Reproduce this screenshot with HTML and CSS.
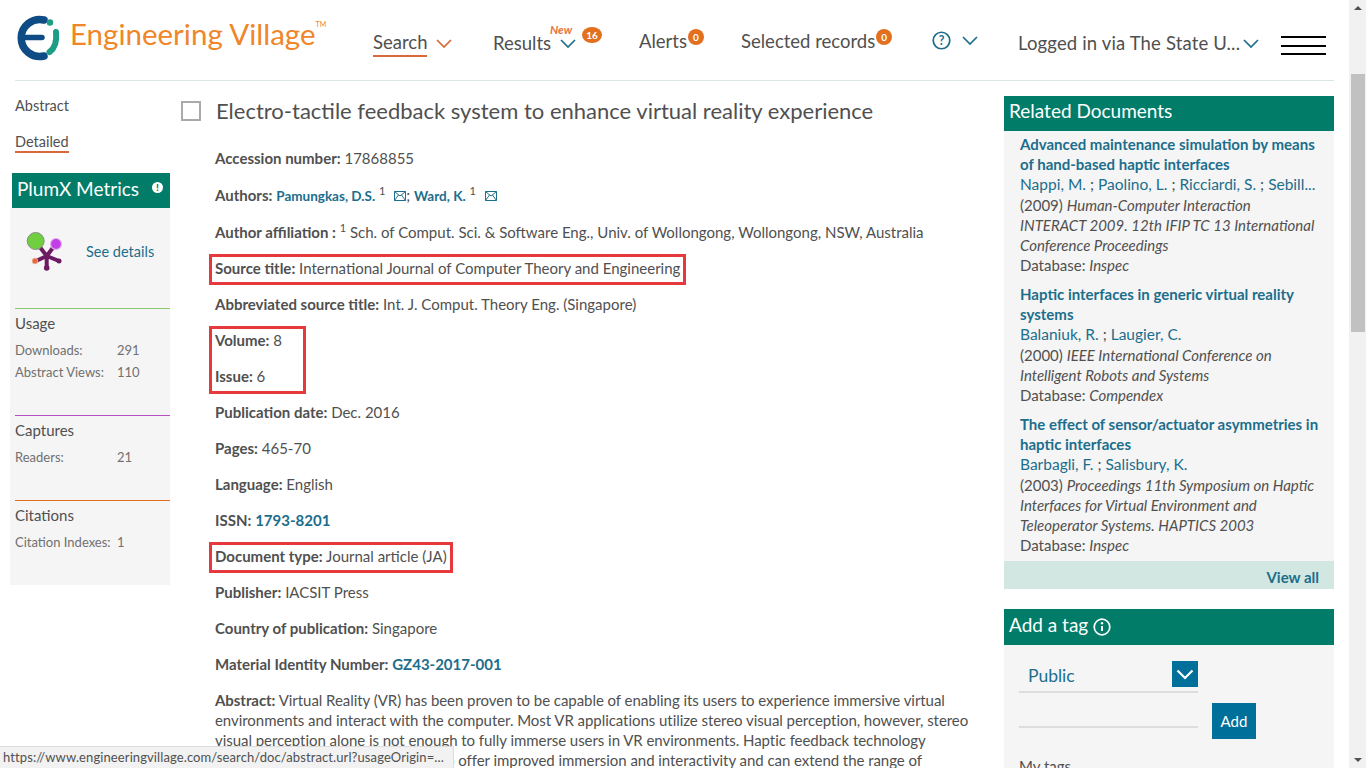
FILE: index.html
```html
<!DOCTYPE html>
<html lang="en">

<head>
    <meta charset="UTF-8" />
    <title>Engineering Village - Detailed record</title>
    <link rel="stylesheet" href="styles.css">
</head>

<body>
    <div class="page">
        <header class="topbar">
            <div class="logo">
                <svg class="logo-mark" width="44" height="46" viewBox="0 0 44 46">
                    <path d="M27 5A18.500 18.500 0 1 0 27 41" fill="none" stroke="#0f4c86" stroke-width="7.500" stroke-linecap="round" />
                    <path d="M7 22.500H25" stroke="#0f4c86" stroke-width="5.500" stroke-linecap="round" />
                    <circle cx="33" cy="7.500" r="3.200" fill="#1d9d84" />
                    <path d="M39 17C40 26 38 33 32.500 37" fill="none" stroke="#1d9d84" stroke-width="6" stroke-linecap="round" />
                </svg>
                <span class="logo-text">Engineering Village<sup class="tm">TM</sup></span>
            </div>
            <nav class="nav">
                <a class="nav-item nav-search"><span class="current">Search</span>
                    <svg class="chev" width="16" height="9" viewBox="0 0 16 9"><path d="M1 1L8 8L15 1" fill="none" stroke="#d9683a" stroke-width="1.700" /></svg>
                </a>
                <a class="nav-item nav-results">Results
                    <svg class="chev" width="16" height="9" viewBox="0 0 16 9"><path d="M1 1L8 8L15 1" fill="none" stroke="#1c6e8c" stroke-width="1.700" /></svg>
                    <em class="new">New</em><span class="badge badge-wide">16</span>
                </a>
                <a class="nav-item nav-alerts">Alerts<span class="badge">0</span></a>
                <a class="nav-item nav-selected">Selected records<span class="badge">0</span></a>
                <a class="nav-item nav-help">
                    <svg width="19" height="19" viewBox="0 0 20 20"><circle cx="10" cy="10" r="8.700" fill="none" stroke="#1c6e8c" stroke-width="1.800" /><text x="10" y="14.500" text-anchor="middle" class="help-mark">?</text></svg>
                    <svg class="chev" width="16" height="9" viewBox="0 0 16 9"><path d="M1 1L8 8L15 1" fill="none" stroke="#1c6e8c" stroke-width="1.700" /></svg>
                </a>
                <a class="nav-item nav-login">Logged in via The State U...
                    <svg class="chev" width="16" height="9" viewBox="0 0 16 9"><path d="M1 1L8 8L15 1" fill="none" stroke="#1c6e8c" stroke-width="1.700" /></svg>
                </a>
                <a class="burger"><i></i><i></i><i></i></a>
            </nav>
        </header>

        <div class="columns">
            <aside class="left">
                <ul class="tabs">
                    <li>Abstract</li>
                    <li><span class="tab-on">Detailed</span></li>
                </ul>
                <div class="plum">
                    <div class="plum-head">PlumX Metrics <span class="plum-info">!</span></div>
                    <div class="plum-body">
                        <div class="plum-top">
                            <svg width="42" height="42" viewBox="0 0 42 42">
                                <path d="M20.700 25L10 11M20.700 25L29 14M20.700 25L10 30M20.700 25V37M20.700 25L33 30" stroke="#6d1a63" stroke-width="4" stroke-linecap="round" />
                                <circle cx="20.700" cy="37" r="2.800" fill="#6d1a63" />
                                <circle cx="33" cy="30" r="2.500" fill="#6d1a63" />
                                <circle cx="9.700" cy="10" r="8.500" fill="#6fcf3f" stroke="#8c8c8c" stroke-width="1" />
                                <circle cx="30" cy="13" r="5.500" fill="#c43ee8" stroke="#e0b5ee" stroke-width="1.200" />
                                <circle cx="9" cy="30" r="2.800" fill="#e8683a" stroke="#e8a58c" stroke-width="1" />
                            </svg>
                            <a class="see-details">See details</a>
                        </div>
                        <div class="metric metric-green">
                            <h4>Usage</h4>
                            <div class="metric-row"><span>Downloads:</span><span>291</span></div>
                            <div class="metric-row"><span>Abstract Views:</span><span>110</span></div>
                        </div>
                        <div class="metric metric-purple">
                            <h4>Captures</h4>
                            <div class="metric-row"><span>Readers:</span><span>21</span></div>
                        </div>
                        <div class="metric metric-orange">
                            <h4>Citations</h4>
                            <div class="metric-row"><span>Citation Indexes:</span><span>1</span></div>
                        </div>
                    </div>
                </div>
            </aside>

            <main class="record">
                <div class="title-row">
                    <span class="checkbox"></span>
                    <h1>Electro-tactile feedback system to enhance virtual reality experience</h1>
                </div>
                <div class="fields">
                    <p class="tall-row"><b>Accession number:</b> 17868855</p>
                    <p class="tall-row"><b>Authors:</b> <a class="author">Pamungkas, D.S.</a> <sup>1</sup>
                        <svg class="mail" width="12" height="10" viewBox="0 0 12 10"><path d="M.5 .5H11.500V9.500H.5ZM.5 .5L6 5L11.500 .5M.5 9.500L4.500 4M11.500 9.500L7.500 4" fill="none" stroke="#1c6e8c" /></svg>; <a class="author">Ward, K.</a> <sup>1</sup>
                        <svg class="mail" width="12" height="10" viewBox="0 0 12 10"><path d="M.5 .5H11.500V9.500H.5ZM.5 .5L6 5L11.500 .5M.5 9.500L4.500 4M11.500 9.500L7.500 4" fill="none" stroke="#1c6e8c" /></svg>
                    </p>
                    <p><b>Author affiliation :</b> <sup>1</sup> Sch. of Comput. Sci. &amp; Software Eng., Univ. of Wollongong, Wollongong, NSW, Australia</p>
                    <p class="marked"><b>Source title:</b> International Journal of Computer Theory and Engineering</p>
                    <p><b>Abbreviated source title:</b> Int. J. Comput. Theory Eng. (Singapore)</p>
                    <div class="marked marked-block">
                        <p><b>Volume:</b> 8</p>
                        <p><b>Issue:</b> 6</p>
                    </div>
                    <p><b>Publication date:</b> Dec. 2016</p>
                    <p><b>Pages:</b> 465-70</p>
                    <p><b>Language:</b> English</p>
                    <p><b>ISSN:</b> <a class="strong-link">1793-8201</a></p>
                    <p class="marked"><b>Document type:</b> Journal article (JA)</p>
                    <p><b>Publisher:</b> IACSIT Press</p>
                    <p><b>Country of publication:</b> Singapore</p>
                    <p><b>Material Identity Number:</b> <a class="strong-link">GZ43-2017-001</a></p>
                    <p class="abstract"><b>Abstract:</b> Virtual Reality (VR) has been proven to be capable of enabling its users to experience immersive virtual<br>environments and interact with the computer. Most VR applications utilize stereo visual perception, however, stereo<br>visual perception alone is not enough to fully immerse users in VR environments. Haptic feedback technology<br>can be combined with stereo view to offer improved immersion and interactivity and can extend the range of</p>
                </div>
            </main>

            <aside class="right">
                <section class="panel">
                    <h3 class="panel-head">Related Documents</h3>
                    <div class="related">
                        <div class="doc">
                            <a class="doc-title">Advanced maintenance simulation by means of hand-based haptic interfaces</a>
                            <div class="doc-authors"><a>Nappi, M.</a> ; <a>Paolino, L.</a> ; <a>Ricciardi, S.</a> ; <a>Sebill...</a></div>
                            <div>(2009) <i>Human-Computer Interaction INTERACT 2009. 12th IFIP TC 13 International Conference Proceedings</i></div>
                            <div>Database: <i>Inspec</i></div>
                        </div>
                        <div class="doc">
                            <a class="doc-title">Haptic interfaces in generic virtual reality systems</a>
                            <div class="doc-authors"><a>Balaniuk, R.</a> ; <a>Laugier, C.</a></div>
                            <div>(2000) <i>IEEE International Conference on Intelligent Robots and Systems</i></div>
                            <div>Database: <i>Compendex</i></div>
                        </div>
                        <div class="doc">
                            <a class="doc-title">The effect of sensor/actuator asymmetries in haptic interfaces</a>
                            <div class="doc-authors"><a>Barbagli, F.</a> ; <a>Salisbury, K.</a></div>
                            <div>(2003) <i>Proceedings 11th Symposium on Haptic Interfaces for Virtual Environment and Teleoperator Systems. HAPTICS 2003</i></div>
                            <div>Database: <i>Inspec</i></div>
                        </div>
                    </div>
                    <div class="view-all"><a>View all</a></div>
                </section>
                <section class="panel tag-panel">
                    <h3 class="panel-head">Add a tag
                        <svg class="tag-info" width="18" height="18" viewBox="0 0 18 18"><circle cx="9" cy="9" r="7.800" fill="none" stroke="#fff" stroke-width="1.700" /><path d="M9 8V13" stroke="#fff" stroke-width="2" /><circle cx="9" cy="5.300" r="1.200" fill="#fff" /></svg>
                    </h3>
                    <div class="tag-body">
                        <div class="tag-select">
                            <span>Public</span>
                            <span class="select-btn">
                                <svg width="18" height="11" viewBox="0 0 18 11"><path d="M1.500 1.500L9 9L16.500 1.500" fill="none" stroke="#fff" stroke-width="2.200" /></svg>
                            </span>
                        </div>
                        <div class="tag-input-row">
                            <span class="tag-input"></span>
                            <button class="tag-add">Add</button>
                        </div>
                        <div class="my-tags">My tags</div>
                    </div>
                </section>
            </aside>
        </div>
        <div class="status">https://www.engineeringvillage.com/search/doc/abstract.url?usageOrigin=...</div>
    </div>

    <div class="scrollbar">
        <span class="arrow arrow-up"></span>
        <div class="scroll-track"><div class="scroll-thumb"></div></div>
        <span class="arrow arrow-down"></span>
    </div>
</body>

</html>
```

FILE: styles.css
```css
html,
body {
    height: 100%;
}

body {
    margin: 0;
    display: flex;
    height: 768px;
    overflow: hidden;
    font-family: "Lato", "Open Sans", sans-serif;
    font-size: 15px;
    color: #505050;
    background-color: #fff;
}

a {
    color: #1c6e8c;
    text-decoration: none;
}

.page {
    position: relative;
    flex: 1;
    min-width: 0;
    overflow: hidden;
    padding: 0 15px;
}

/* top bar */
.topbar {
    display: flex;
    height: 80px;
    border-bottom: 1px solid #d8e8e5;
}

.logo {
    display: flex;
    width: 358px;
    flex: none;
    padding: 15px 0 0 2px;
    box-sizing: border-box;
}

.logo-mark {
    flex: none;
}

.logo-text {
    margin: 1px 0 0 9px;
    font-size: 29.5px;
    line-height: 36px;
    color: #f0862a;
    white-space: nowrap;
}

.tm {
    font-size: 7px;
    vertical-align: 18px;
    line-height: 0;
}

.nav {
    position: relative;
    flex: 1;
    display: flex;
    font-size: 18.5px;
}

.nav-item {
    position: relative;
    display: flex;
    align-items: center;
    gap: 8px;
    height: 30px;
    color: #505050;
    white-space: nowrap;
}

.nav-search {
    margin-top: 28px;
    width: 120px;
    gap: 9px;
}

.current {
    border-bottom: 2px solid #d9683a;
    line-height: 25px;
}

.nav-results {
    margin-top: 28px;
    width: 146px;
    gap: 9px;
}

.nav-alerts {
    margin-top: 26px;
    width: 102px;
    gap: 1px;
}

.nav-selected {
    margin-top: 26px;
    width: 191px;
    gap: 1px;
}

.nav-help {
    margin-top: 25px;
    width: 86px;
    gap: 11px;
}

.nav-login {
    margin-top: 28px;
    width: 263px;
    gap: 3px;
    letter-spacing: .15px;
}

.help-mark {
    font-family: "Lato", sans-serif;
    font-size: 13px;
    font-weight: 700;
    fill: #1c6e8c;
}

.new {
    position: absolute;
    left: 57px;
    top: -5px;
    font-size: 11.500px;
    font-weight: 700;
    color: #e8713a;
}

.badge {
    display: inline-block;
    width: 16px;
    height: 16px;
    margin-top: -9px;
    border-radius: 50%;
    background-color: #e2701f;
    color: #fff;
    font-size: 10px;
    font-weight: 700;
    line-height: 16px;
    text-align: center;
    letter-spacing: 0;
}

.badge-wide {
    width: 20px;
    margin: -17px 0 0 -3px;
}

.burger {
    position: absolute;
    left: 908px;
    top: 36px;
    display: flex;
    flex-direction: column;
    gap: 6.500px;
    width: 45px;
}

.burger i {
    display: block;
    height: 2px;
    background-color: #000;
}

/* columns */
.columns {
    display: flex;
    align-items: flex-start;
}

.left {
    width: 160px;
    flex: none;
    margin-left: -5px;
}

.tabs {
    list-style: none;
    margin: 0;
    padding: 15px 0 0 5px;
    font-size: 14.500px;
}

.tabs li {
    height: 36px;
    line-height: 20px;
}

.tab-on {
    display: inline-block;
    border-bottom: 2px solid #d9683a;
    line-height: 19px;
}

.plum {
    margin-top: 5px;
}

.plum-head {
    margin-left: 2px;
    height: 35px;
    padding-left: 5px;
    background-color: #007c69;
    color: #fff;
    font-size: 19px;
    line-height: 32px;
    position: relative;
}

.plum-info {
    position: absolute;
    right: 7px;
    top: 9px;
    width: 11px;
    height: 11px;
    border-radius: 50%;
    background-color: #fff;
    color: #007c69;
    font-size: 10px;
    font-weight: 900;
    line-height: 11px;
    text-align: center;
}

.plum-body {
    height: 377px;
    padding-left: 5px;
    background-color: #f5f5f5;
}

.plum-top {
    display: flex;
    align-items: center;
    height: 100px;
    gap: 18px;
    padding: 0 0 13px 11px;
    box-sizing: border-box;
}

.see-details {
    font-size: 14.500px;
}

.metric {
    border-top: 1px solid #000;
    padding-top: 4px;
    font-size: 13px;
    color: #707070;
}

.metric h4 {
    margin: 0 0 6px;
    font-size: 15px;
    font-weight: 400;
    line-height: 20px;
    color: #505050;
}

.metric-row {
    display: flex;
    height: 22px;
    line-height: 22px;
}

.metric-row span:first-child {
    width: 102px;
    white-space: nowrap;
}

.metric-green {
    border-color: #8bc76b;
    height: 102px;
}

.metric-purple {
    border-color: #b84fc4;
    height: 80px;
}

.metric-orange {
    border-color: #e2701f;
}

/* record */
.record {
    width: 824px;
    flex: none;
    margin-left: 10px;
}

.title-row {
    display: flex;
    align-items: center;
    gap: 15px;
    padding: 15px 0 0 1px;
    height: 30px;
}

.checkbox {
    width: 16px;
    height: 16px;
    border: 2px solid #aaa;
    flex: none;
}

h1 {
    margin: -2px 0 0;
    font-size: 22px;
    font-weight: 400;
    white-space: nowrap;
}

.fields {
    padding: 22px 0 0 35px;
}

.fields p {
    margin: 0;
    height: 36px;
    line-height: 20px;
    white-space: nowrap;
}

.fields p.tall-row {
    height: 37px;
}

.fields sup {
    font-size: 11px;
    line-height: 0;
}

.fields b {
    font-weight: 700;
}

.author {
    font-size: 13.500px;
    font-weight: 700;
}

.mail {
    margin-left: 5px;
}

.strong-link {
    font-weight: 700;
}

/* red annotation boxes */
.marked {
    width: fit-content;
    margin-left: -2px;
    padding: 0 2px;
    outline: 3px solid #e5393d;
    outline-offset: 1px;
}

.fields p.marked {
    height: 23px;
    margin: 0 0 13px -2px;
}

.marked-block {
    width: 89px;
    height: 60px;
    margin-bottom: 12px;
    box-sizing: border-box;
}

.abstract {
    letter-spacing: -.05px;
}

.fields p.abstract {
    height: auto;
}

/* right column */
.right {
    width: 330px;
    flex: none;
    margin-top: 15px;
}

.panel-head {
    margin: 0;
    height: 35px;
    padding-left: 5px;
    background-color: #007c69;
    color: #fff;
    font-size: 19px;
    font-weight: 400;
    line-height: 30px;
}

.related {
    padding: 3px 15px 6px 16px;
    background-color: #f5f5f5;
    line-height: 20px;
    font-size: 15px;
}

.doc {
    margin-bottom: 9px;
}

.doc:last-child {
    margin-bottom: 0;
}

.doc-title {
    display: block;
    margin-bottom: 1px;
    font-weight: 700;
}

.doc-authors {
    white-space: nowrap;
    font-size: 15.500px;
    line-height: 19px;
    height: 20px;
}

.view-all {
    height: 28px;
    padding-right: 15px;
    background-color: #d2e7e1;
    font-weight: 700;
    line-height: 33px;
    text-align: right;
}

.tag-panel {
    margin-top: 20px;
}

.tag-panel .panel-head {
    height: 36px;
    line-height: 32px;
}

.tag-info {
    vertical-align: -4px;
}

.tag-body {
    padding: 16px 15px 0;
    height: 140px;
    background-color: #f5f5f5;
}

.tag-select {
    display: flex;
    justify-content: space-between;
    width: 179px;
    height: 30px;
    border-bottom: 2px solid #ddd;
    font-size: 17.500px;
    color: #1c6e8c;
    line-height: 30px;
}

.tag-select span:first-child {
    padding-left: 9px;
}

.select-btn {
    display: flex;
    align-items: center;
    justify-content: center;
    width: 26px;
    height: 26px;
    background-color: #00709b;
}

.tag-input-row {
    display: flex;
    align-items: flex-end;
    gap: 14px;
    margin-top: 10px;
}

.tag-input {
    width: 179px;
    height: 2px;
    margin-bottom: 11px;
    background-color: #ddd;
}

.tag-add {
    width: 44px;
    height: 36px;
    padding: 0;
    border: none;
    background-color: #00709b;
    color: #fff;
    font-family: inherit;
    font-size: 15px;
}

.my-tags {
    margin-top: 18px;
    font-size: 15px;
}

/* browser status bubble, sits over the text */
.status {
    position: absolute;
    left: 0;
    bottom: 0;
    width: 450px;
    height: 21px;
    padding-left: 3px;
    background-color: #f2f2f2;
    border: 1px solid #ddd;
    border-width: 1px 1px 0 0;
    font-size: 13px;
    letter-spacing: .1px;
    line-height: 21px;
    color: #505050;
    white-space: nowrap;
}

/* scrollbar */
.scrollbar {
    display: flex;
    flex-direction: column;
    align-items: center;
    width: 17px;
    flex: none;
    background-color: #f1f1f1;
}

.scroll-track {
    flex: 1;
    width: 100%;
    padding-top: 58px;
    box-sizing: border-box;
}

.scroll-thumb {
    width: 14px;
    height: 258px;
    margin: 0 auto;
    background-color: #c1c1c1;
}

.arrow {
    width: 0;
    height: 0;
    margin: 6px 0;
    border-left: 4px solid transparent;
    border-right: 4px solid transparent;
}

.arrow-up {
    border-bottom: 4px solid #505050;
}

.arrow-down {
    border-top: 4px solid #505050;
}
```
